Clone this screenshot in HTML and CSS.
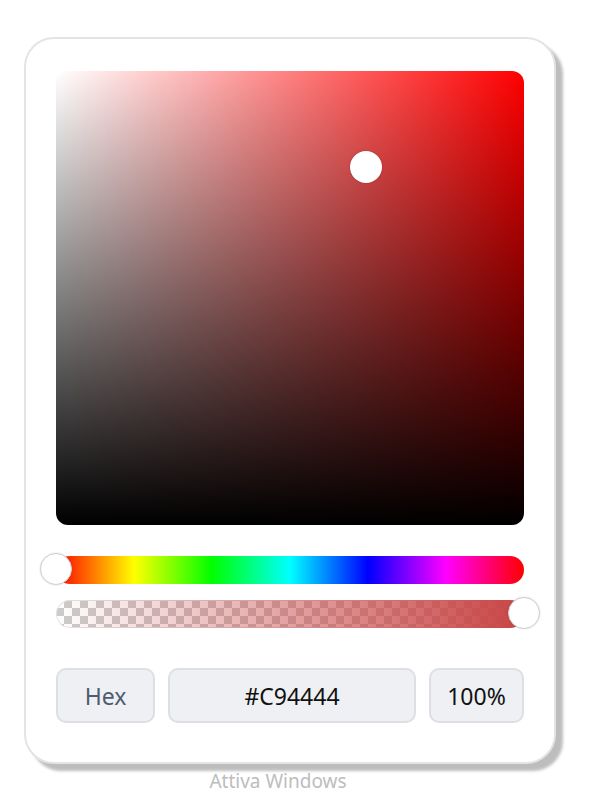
FILE: index.html
```html
<!DOCTYPE html>
<html lang="it">
<head>
<meta charset="utf-8">
<title>Selettore colore</title>
<link rel="stylesheet" href="styles.css">
</head>
<body>
<div class="picker">
  <div class="sv-area">
    <span class="sv-thumb"></span>
  </div>
  <div class="slider hue">
    <span class="slider-thumb thumb-start"></span>
  </div>
  <div class="slider alpha">
    <div class="alpha-fill"></div>
    <span class="slider-thumb thumb-end"></span>
  </div>
  <div class="fields">
    <div class="field mode">Hex</div>
    <div class="field value">#C94444</div>
    <div class="field percent">100%</div>
  </div>
</div>
<div class="watermark">Attiva Windows</div>
</body>
</html>
```
FILE: styles.css
```css
html, body {
  margin: 0;
  padding: 0;
  background: #ffffff;
  font-family: "Noto Sans", "Open Sans", sans-serif;
}

.picker {
  box-sizing: border-box;
  width: 532px;
  height: 727px;
  margin: 37px 0 0 24px;
  padding: 32px 30px 0 30px;
  background: #ffffff;
  border: 2px solid #e1e4e8;
  border-radius: 30px;
  box-shadow: 7px 7px 3px rgba(0, 0, 0, 0.26);
  display: flex;
  flex-direction: column;
}

.sv-area {
  position: relative;
  height: 454px;
  border-radius: 12px;
  background:
    linear-gradient(to top, #000000, rgba(0, 0, 0, 0)),
    linear-gradient(to right, #ffffff, #ff0000);
}

.sv-thumb {
  position: absolute;
  left: 294px;
  top: 80px;
  width: 32px;
  height: 32px;
  border-radius: 50%;
  background: #ffffff;
  box-shadow: 0 0 2px rgba(0, 0, 0, 0.25);
}

.slider {
  position: relative;
  height: 28px;
  border-radius: 14px;
}

.hue {
  margin-top: 31px;
  background: linear-gradient(to right,
    #ff0000 0%, #ffff00 16.66%, #00ff00 33.33%, #00ffff 50%,
    #0000ff 66.66%, #ff00ff 83.33%, #ff0000 100%);
}

.alpha {
  margin-top: 16px;
  background-color: #ffffff;
  background-image:
    linear-gradient(45deg, #cccccc 25%, transparent 25%, transparent 75%, #cccccc 75%),
    linear-gradient(45deg, #cccccc 25%, transparent 25%, transparent 75%, #cccccc 75%);
  background-size: 16px 16px;
  background-position: 0 0, 8px 8px;
  box-shadow: inset 0 0 0 1px #e2e2e2;
}

.alpha-fill {
  height: 100%;
  border-radius: 14px;
  background: linear-gradient(to right, rgba(201, 68, 68, 0), rgb(201, 68, 68));
}

.slider-thumb {
  position: absolute;
  top: -3px;
  width: 32px;
  height: 32px;
  box-sizing: border-box;
  border-radius: 50%;
  background: #ffffff;
  border: 1px solid #cfcfcf;
  box-shadow: 0 0 2px rgba(0, 0, 0, 0.15);
}

.thumb-start { left: -16px; }
.thumb-end { right: -16px; }

.fields {
  margin-top: 40px;
  display: flex;
  gap: 13px;
  height: 55px;
}

.field {
  box-sizing: border-box;
  display: flex;
  align-items: center;
  justify-content: center;
  background: #eef0f3;
  border: 2px solid #dcdfe4;
  border-radius: 10px;
  font-size: 23px;
  color: #111111;
}

.mode {
  width: 99px;
  color: #4d5d70;
}

.value {
  flex: 1;
}

.percent {
  width: 95px;
}

.watermark {
  margin-top: 7px;
  line-height: 20px;
  text-align: center;
  font-size: 19px;
  color: #bdbdbd;
  padding-right: 42px;
}
```
